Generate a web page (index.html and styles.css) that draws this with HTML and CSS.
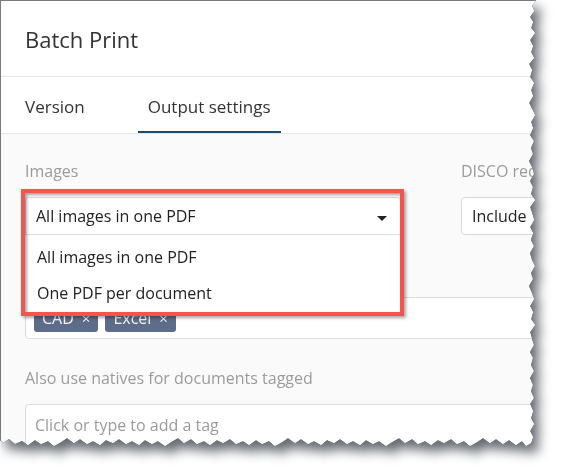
FILE: index.html
```html
<!DOCTYPE html>
<html lang="en">
<head>
  <meta charset="UTF-8" />
  <meta name="viewport" content="width=device-width, initial-scale=1.0"/>
  <title>Batch Print</title>
  <link rel="stylesheet" href="styles.css">
</head>
<body>
  <div class="sheet">
    <div class="panel">
      <header class="modal-header">
        <h1>Batch Print</h1>
      </header>

      <nav class="tabs">
        <span class="tab">Version</span>
        <span class="tab active">Output settings</span>
      </nav>

      <div class="modal-body">
        <div class="row">
          <div class="field">
            <label>Images</label>
            <div class="dropdown open">
              <div class="select">All images in one PDF <span class="caret"></span></div>
              <ul class="menu">
                <li>All images in one PDF</li>
                <li>One PDF per document</li>
              </ul>
              <span class="callout"></span>
            </div>
          </div>
          <div class="field">
            <label>DISCO redactions</label>
            <div class="select">Include</div>
          </div>
        </div>

        <!-- label of this field sits under the open menu -->
        <div class="field">
          <span class="label-space"></span>
          <div class="tag-input">
            <span class="tag">CAD <span class="remove">&times;</span></span>
            <span class="tag">Excel <span class="remove">&times;</span></span>
          </div>
        </div>

        <div class="field">
          <label>Also use natives for documents tagged</label>
          <div class="tag-input">
            <span class="placeholder">Click or type to add a tag</span>
          </div>
        </div>
      </div>
    </div>
  </div>
</body>
</html>
```

FILE: styles.css
```css
html, body {
  margin: 0;
  padding: 0;
  overflow: hidden;
  background: #fff;
  font-family: "Open Sans", Arial, sans-serif;
}
.sheet {
  width: 562px;
  height: 472px;
  filter: drop-shadow(0 0 0.7px rgba(0,0,0,0.9)) drop-shadow(6px 8px 6px rgba(50,56,66,0.75));
}
.panel {
  width: 537px;
  height: 448px;
  overflow: hidden;
  background: #fafafa;
  border-left: 1px solid #7a7a7a;
  border-top: 1px solid #7a7a7a;
  box-sizing: border-box;
  clip-path: polygon(
    0 0, 536px 0, 532px 6px, 534px 11px, 530px 17px, 533px 22px, 531px 28px, 535px 33px,
    530px 40px, 533px 46px, 531px 52px, 534px 58px, 529px 64px, 532px 70px, 530px 77px,
    534px 83px, 531px 90px, 533px 96px, 529px 103px, 532px 109px, 535px 115px, 531px 122px,
    533px 128px, 530px 135px, 534px 141px, 531px 148px, 533px 154px, 529px 161px, 532px 167px,
    534px 174px, 530px 181px, 533px 187px, 531px 194px, 535px 200px, 530px 207px, 532px 213px,
    534px 220px, 530px 227px, 533px 233px, 531px 240px, 534px 246px, 530px 253px, 532px 260px,
    535px 266px, 531px 273px, 533px 279px, 529px 286px, 532px 293px, 534px 299px, 530px 306px,
    533px 312px, 531px 319px, 535px 325px, 530px 332px, 532px 339px, 534px 345px, 530px 352px,
    533px 358px, 531px 365px, 534px 371px, 530px 378px, 533px 385px, 531px 391px, 534px 398px,
    530px 404px, 533px 411px, 531px 418px, 534px 424px, 530px 431px, 533px 437px, 531px 443px,
    526px 446px, 522px 441px, 516px 445px, 509px 440px, 503px 444px, 496px 439px, 490px 443px,
    483px 438px, 477px 442px, 470px 446px, 464px 441px, 457px 444px, 451px 439px, 444px 443px,
    438px 440px, 431px 445px, 425px 441px, 418px 444px, 412px 439px, 405px 443px, 399px 438px,
    392px 442px, 386px 446px, 379px 441px, 373px 444px, 366px 440px, 360px 445px, 353px 441px,
    347px 444px, 340px 439px, 334px 443px, 327px 440px, 321px 445px, 314px 441px, 308px 444px,
    301px 439px, 295px 443px, 288px 438px, 282px 442px, 275px 446px, 269px 441px, 262px 444px,
    256px 440px, 249px 445px, 243px 441px, 236px 444px, 230px 439px, 223px 443px, 217px 440px,
    210px 445px, 204px 441px, 197px 444px, 191px 439px, 184px 443px, 178px 438px, 171px 442px,
    165px 446px, 158px 441px, 152px 444px, 145px 440px, 139px 445px, 132px 441px, 126px 444px,
    119px 439px, 113px 443px, 106px 440px, 100px 445px, 93px 441px, 87px 444px, 80px 439px,
    74px 443px, 67px 438px, 61px 442px, 54px 446px, 48px 441px, 41px 444px, 35px 440px,
    28px 445px, 22px 441px, 15px 444px, 9px 439px, 3px 443px, 0 440px
  );
}

/* header + tabs */
.modal-header {
  height: 75px;
  padding: 0 24px;
  display: flex;
  align-items: center;
  background: #fff;
  border-bottom: 1px solid #e6e6e6;
}
.modal-header h1 {
  margin: 0;
  font-size: 22px;
  font-weight: 400;
  color: #333;
}
.tabs {
  display: flex;
  gap: 43px;
  height: 56px;
  padding-left: 14px;
  background: #fff;
  border-bottom: 1px solid #e6e6e6;
}
.tab {
  display: flex;
  align-items: center;
  padding: 2px 10px 0;
  font-size: 17px;
  color: #333;
  box-sizing: border-box;
}
.tab.active {
  box-shadow: inset 0 -2px 0 #1d4a6f;
}

/* form */
.modal-body {
  width: 640px;
  padding: 25px 24px 0;
}
.row {
  display: grid;
  grid-template-columns: 376px 200px;
  column-gap: 60px;
  margin-bottom: 24px;
}
.field {
  margin-bottom: 27px;
}
.row .field {
  margin-bottom: 0;
}
.field label,
.label-space {
  display: block;
  height: 24px;
  line-height: 24px;
  margin-bottom: 14px;
  font-size: 16px;
  color: #9b9b9b;
  white-space: nowrap;
}
.select {
  position: relative;
  height: 38px;
  padding: 0 10px;
  display: flex;
  align-items: center;
  background: #fff;
  border: 1px solid #d9d9d9;
  border-radius: 4px;
  box-sizing: border-box;
  font-size: 16px;
  color: #222;
}
.caret {
  position: absolute;
  right: 13px;
  top: 18px;
  border-left: 5px solid transparent;
  border-right: 5px solid transparent;
  border-top: 5px solid #222;
}

.dropdown {
  position: relative;
  z-index: 2;
}
.dropdown.open .select {
  border-radius: 4px 4px 0 0;
  border-bottom-color: #ddd;
}
.menu {
  position: absolute;
  top: 100%;
  left: 0;
  right: 0;
  margin: 0;
  padding: 4px 0;
  list-style: none;
  background: #fff;
}
.menu li {
  height: 36px;
  line-height: 36px;
  padding: 0 12px;
  font-size: 16px;
  color: #222;
}
.callout {
  position: absolute;
  top: -8px;
  left: -4px;
  width: 383px;
  height: 127px;
  border: 4px solid #f3554a;
  box-sizing: border-box;
  box-shadow: 2px 2px 3px rgba(0,0,0,0.35), inset 2px 2px 3px rgba(0,0,0,0.35);
}

.tag-input {
  min-height: 42px;
  padding: 6px 8px;
  display: flex;
  align-items: center;
  gap: 7px;
  background: #fff;
  border: 1px solid #dcdcdc;
  border-radius: 4px;
  box-sizing: border-box;
}
.tag {
  display: inline-flex;
  align-items: center;
  height: 28px;
  padding: 0 8px;
  background: #5d6c88;
  color: #f4f6f9;
  border-radius: 3px;
  font-size: 16px;
}
.tag .remove {
  margin-left: 8px;
  font-size: 15px;
}
.placeholder {
  font-size: 16px;
  color: #9b9b9b;
  padding-left: 1px;
}
```
